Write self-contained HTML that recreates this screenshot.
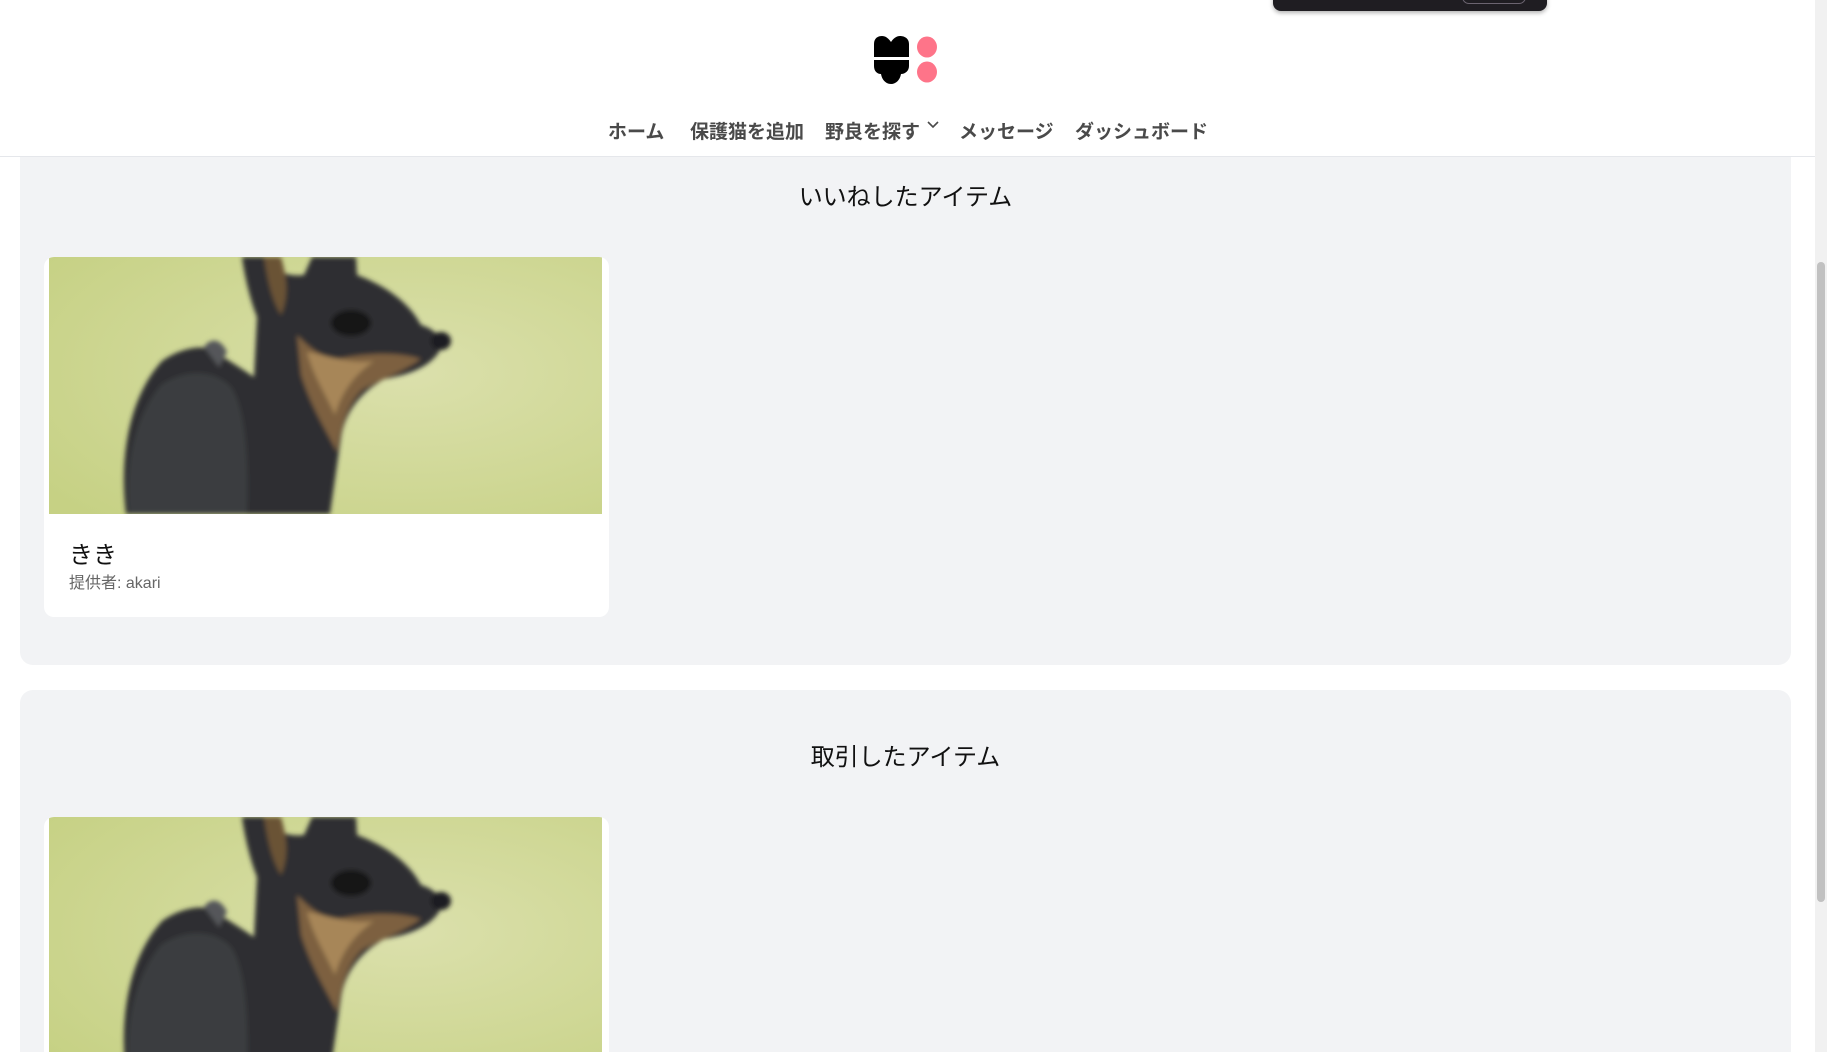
<!DOCTYPE html>
<html><head><meta charset="utf-8"><style>
*{margin:0;padding:0;box-sizing:border-box}
html,body{width:1827px;height:1052px;overflow:hidden;background:#fff;font-family:"Liberation Sans","Noto Sans CJK JP",sans-serif;position:relative}
.header{position:absolute;left:0;top:0;width:1815px;height:157px;background:#fff;border-bottom:1px solid #e5e7eb;z-index:5}
.nav{position:absolute;top:117px;font-size:19px;font-weight:bold;color:#4a4a4a;white-space:nowrap}
.pill{position:absolute;left:1273px;top:-10px;width:274px;height:21px;background:#1f1d22;border-radius:8px;z-index:6;box-shadow:0 2px 4px rgba(0,0,0,.3)}
.pill i{position:absolute;left:189px;top:0;width:64px;height:14px;border:1px solid #6b6470;border-radius:8px}
.panel{position:absolute;left:20px;width:1771px;background:#f2f3f5;border-radius:13px;overflow:hidden}
.title{position:absolute;left:0;width:100%;text-align:center;font-size:24px;color:#111}
.card{position:absolute;left:24px;width:565px;background:#fff;border-radius:10px;overflow:hidden}
.img{position:absolute;left:5px;top:0;width:553px;height:257px}
.name{position:absolute;left:25px;font-size:24px;color:#111}
.sub{position:absolute;left:25px;font-size:16px;color:#666}
.sb{position:absolute;right:0;top:0;width:12px;height:1052px;background:#f1f1f1;z-index:7}
.sb i{position:absolute;left:2px;top:262px;width:8px;height:640px;background:#c1c1c1;border-radius:4px}
</style></head><body>
<svg width="0" height="0" style="position:absolute"><defs>
<radialGradient id="bg" cx="0.65" cy="0.45" r="0.8"><stop offset="0" stop-color="#dbe0ac"/><stop offset="1" stop-color="#c6d184"/></radialGradient>
<filter id="bl"><feGaussianBlur stdDeviation="2.5"/></filter>
<symbol id="dog" viewBox="0 0 553 257">
<rect width="553" height="257" fill="url(#bg)"/>
<g filter="url(#bl)">
<path d="M77 257 C70 200 80 140 113 104 C130 92 150 88 160 92 C175 100 190 110 205 120 L208 60 C200 40 195 15 193 0 L215 0 C225 15 240 20 255 18 L263 0 L307 0 L308 18 C335 28 360 45 372 68 C385 72 395 80 390 95 C380 110 360 118 335 122 C312 135 296 155 292 180 L281 257 Z" fill="#2e2f31"/>
<path d="M80 257 C75 210 85 160 112 128 C135 112 165 112 182 130 C196 150 200 200 198 257 Z" fill="#3b3c3f"/>
<path d="M248 78 C262 92 278 106 298 100 C322 96 350 95 372 102 C356 114 332 122 314 132 C300 145 292 165 288 195 C278 175 262 150 252 118 Z" fill="#7d6140"/>
<path d="M258 95 C278 98 300 108 325 104 C302 120 292 138 286 158 C276 136 264 118 258 95Z" fill="#a78658"/>
<ellipse cx="302" cy="66" rx="20" ry="13" fill="#141414"/>
<ellipse cx="392" cy="84" rx="10" ry="9" fill="#1c1a20"/>
<path d="M215 0 L232 0 C238 20 240 40 232 58 C222 42 218 20 215 0Z" fill="#6b5335"/>
<path d="M155 90 C162 80 172 82 178 95 L170 110 Z" fill="#55565a"/>
</g>
</symbol></defs></svg>
<div class="pill"><i></i></div>
<div class="header">
<svg style="position:absolute;left:872px;top:36px" width="68" height="48" viewBox="0 0 68 48">
<path d="M2 21 L2 8 C2 2 6 0 10 0 C14 0 17 3 19 6 C21 3 24 0 28 0 C32 0 37 2 37 8 L37 21 Z" fill="#000"/>
<path d="M2 24 L37 24 L37 30 C37 35 33 38 29 38 C28 44 24 48 19 48 C14 48 10 44 9 38 C5 38 2 35 2 30 Z" fill="#000"/>
<ellipse cx="55" cy="11" rx="10" ry="10.5" fill="#fe7489"/>
<ellipse cx="55" cy="36" rx="10" ry="10.5" fill="#fe7489"/>
</svg>
<div class="nav" style="left:608px">ホーム</div>
<div class="nav" style="left:690px">保護猫を追加</div>
<div class="nav" style="left:825px">野良を探す</div>
<svg style="position:absolute;left:927px;top:121px" width="12" height="8" viewBox="0 0 12 8"><path d="M1 1 L6 6 L11 1" stroke="#4a4a4a" stroke-width="1.6" fill="none"/></svg>
<div class="nav" style="left:959px">メッセージ</div>
<div class="nav" style="left:1075px">ダッシュボード</div>
</div>
<div class="panel" style="top:120px;height:545px">
<div class="title" style="top:57px">いいねしたアイテム</div>
<div class="card" style="top:137px;height:360px">
<svg class="img"><use href="#dog"/></svg>
<div class="name" style="top:278px">きき</div>
<div class="sub" style="top:312px">提供者: akari</div>
</div>
</div>
<div class="panel" style="top:690px;height:362px;border-radius:13px 13px 0 0">
<div class="title" style="top:47px">取引したアイテム</div>
<div class="card" style="top:127px;height:300px">
<svg class="img"><use href="#dog"/></svg>
</div>
</div>
<div class="sb"><i></i></div>
</body></html>
